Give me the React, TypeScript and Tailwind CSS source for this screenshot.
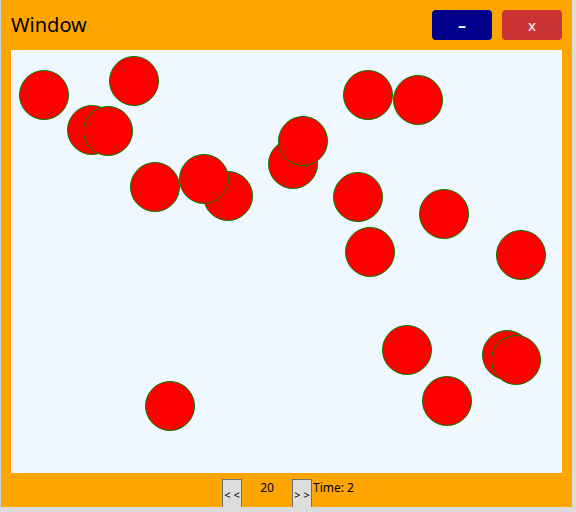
import React from "react"

// circle centres in page coordinates; later entries sit on top
const balls = [
  [44, 95], [134, 81], [92, 130], [108, 131], [155, 187],
  [228, 196], [204, 179], [293, 164], [303, 141], [368, 95],
  [418, 100], [358, 197], [444, 214], [370, 252], [521, 255],
  [407, 350], [507, 355], [516, 360], [447, 401], [170, 406],
]

export default function App() {
  return (
    <div className="w-[576px] h-[512px] bg-[#dcdcdc] font-['Noto_Sans',sans-serif]">
      <div className="w-[572px] h-[507px] bg-[#FFA500] border-l border-[#c9d3da] flex flex-col overflow-hidden">
        {/* title bar */}
        <div className="h-[50px] shrink-0 flex items-center pl-[10px] pr-[10px]">
          <div className="text-[20px] text-black leading-none flex-1">Window</div>
          <button className="w-[60px] h-[30px] rounded-[4px] bg-[#00008B] text-white text-[16px] font-bold leading-none flex items-center justify-center">
            –
          </button>
          <button className="w-[60px] h-[30px] ml-[10px] rounded-[4px] bg-[#CC3333] text-white text-[15px] leading-none flex items-center justify-center">
            x
          </button>
        </div>

        {/* canvas */}
        <div className="ml-[10px] mr-[10px] h-[423px] shrink-0 bg-[#F0F8FF] relative">
          {balls.map(([cx, cy], i) => (
            <div
              key={i}
              className="absolute w-[50px] h-[50px] rounded-full bg-[#FF0000] border border-[#008000]"
              style={{ left: cx - 11 - 25, top: cy - 50 - 25 }}
            />
          ))}
        </div>

        {/* controls */}
        <div className="flex items-start pt-[6px] pl-[221px] text-[12px] text-black">
          <button className="w-[20px] h-[30px] shrink-0 bg-[#dddddd] border border-[#707070] text-[11px] leading-none flex items-center justify-center">
            &lt; &lt;
          </button>
          <div className="w-[50px] text-center leading-[18px]">20</div>
          <button className="w-[20px] h-[30px] shrink-0 bg-[#dddddd] border border-[#707070] text-[11px] leading-none flex items-center justify-center">
            &gt; &gt;
          </button>
          <div className="w-[100px] pl-[1px] leading-[18px]">Time: 2</div>
        </div>
      </div>
    </div>
  )
}
